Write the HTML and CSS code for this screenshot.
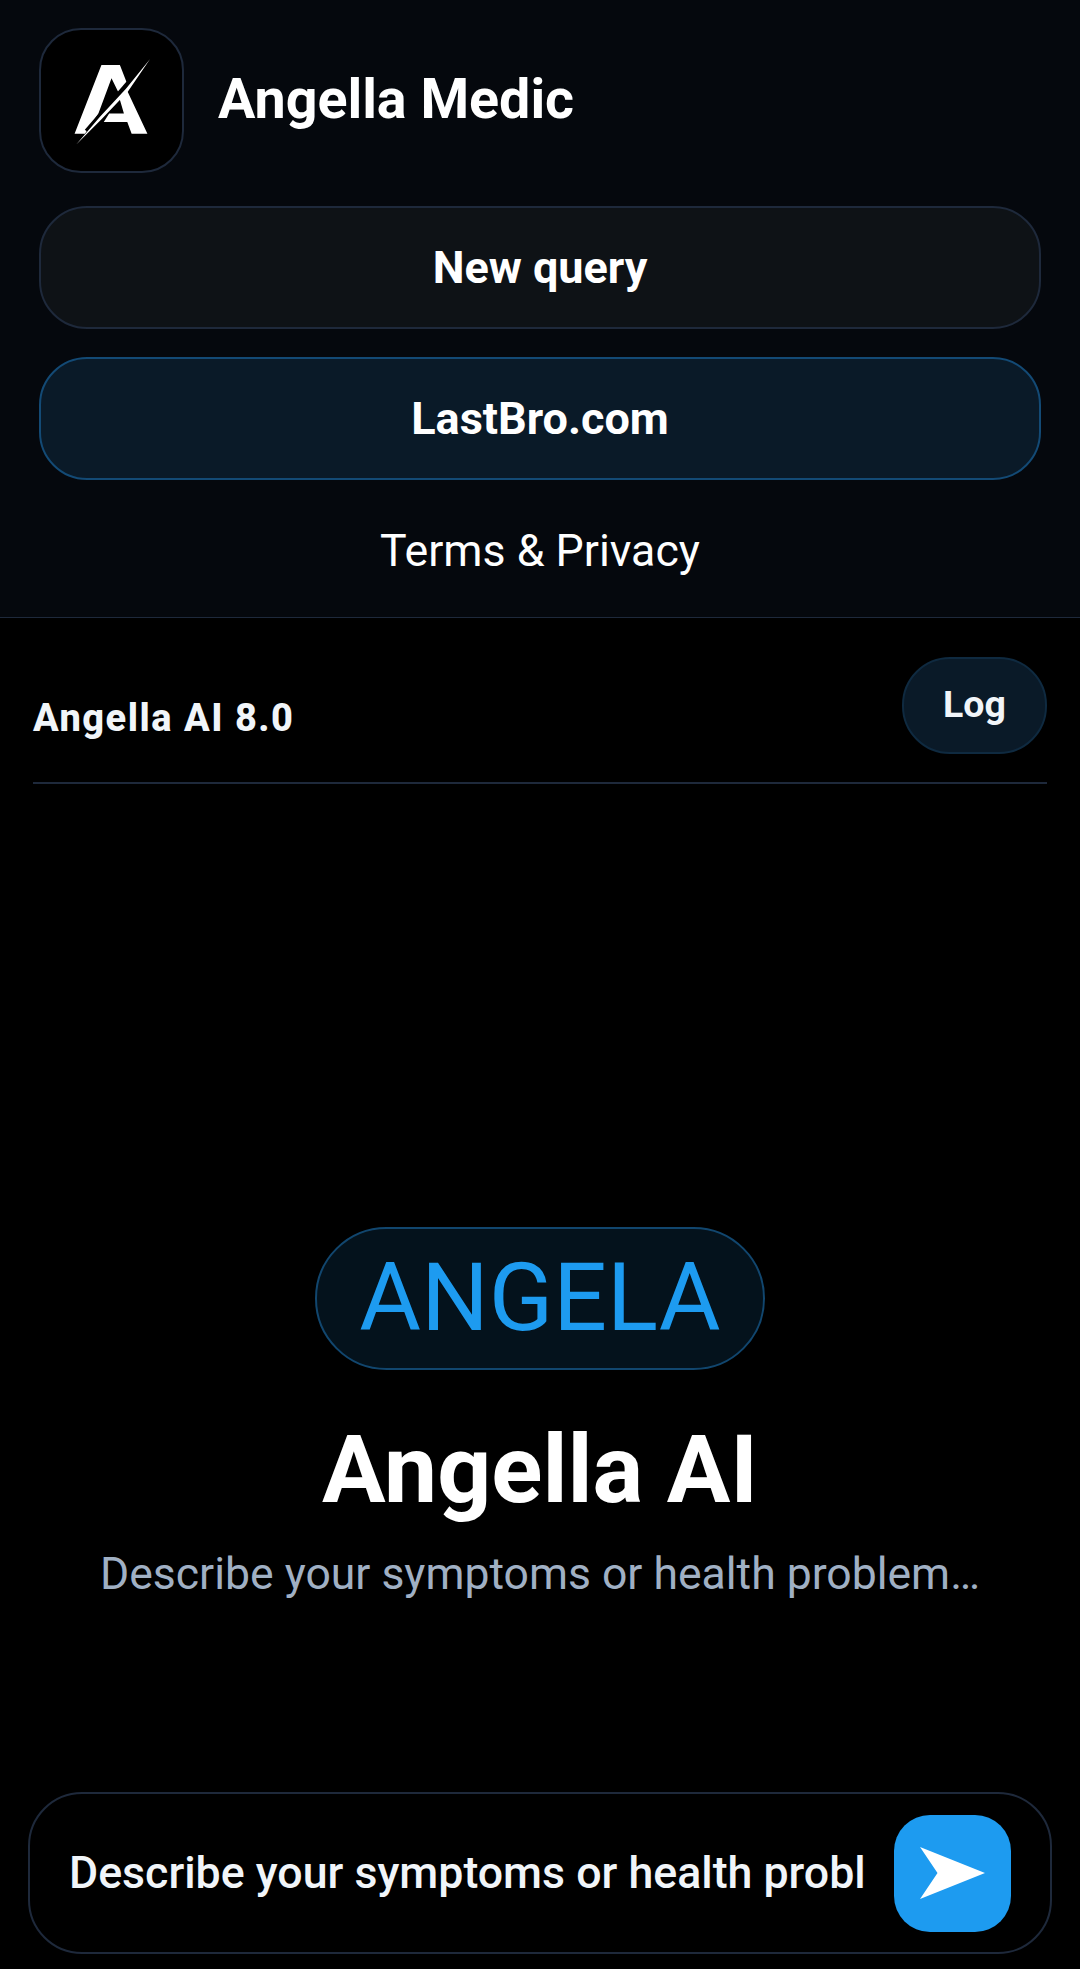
FILE: index.html
```html
<!DOCTYPE html>
<html lang="en">
<head>
<meta charset="utf-8">
<title>Angella Medic</title>
<link rel="stylesheet" href="styles.css">
</head>
<body>
<div class="app">
  <header class="sidebar">
    <div class="brand">
      <div class="brand-logo">
        <svg class="brand-mark" viewBox="60 55 430 432" aria-hidden="true">
          <path class="mark-fill" d="M165 370L245 165H300L322 222L298 252L275 205L236 310L196 370Z"/>
          <path class="mark-fill" d="M320 238L382 370H335L322 335H252L268 310H312L298 262Z"/>
          <path class="mark-cut" d="M336 205L200 362"/>
          <path class="mark-fill" d="M390 147L318 236L240 320L170 402L246 326L324 244Z"/>
        </svg>
      </div>
      <span class="brand-name">Angella Medic</span>
    </div>
    <a class="side-btn side-btn-plain">New query</a>
    <a class="side-btn side-btn-accent">LastBro.com</a>
    <a class="side-link">Terms &amp; Privacy</a>
  </header>

  <main class="chat">
    <div class="chat-head">
      <span class="model-name">Angella AI 8.0</span>
      <button class="log-btn" type="button">Log</button>
    </div>

    <section class="hero">
      <div class="hero-badge">ANGELA</div>
      <h1 class="hero-title">Angella AI</h1>
      <p class="hero-sub">Describe your symptoms or health problem…</p>
    </section>

    <form class="composer">
      <div class="composer-text">Describe your symptoms or health probl</div>
      <button class="send-btn" type="button" aria-label="Send">
        <svg class="send-icon" viewBox="0 0 66 52" aria-hidden="true">
          <path d="M0 0L65 26L0 52L17.500 26Z"/>
        </svg>
      </button>
    </form>
  </main>
</div>
</body>
</html>
```

FILE: styles.css
```css
* {
  box-sizing: border-box;
}

html,
body {
  margin: 0;
  height: 100%;
  background: #000;
}

body {
  font-family: Roboto, "Liberation Sans", sans-serif;
  color: #fff;
}

.app {
  display: flex;
  flex-direction: column;
  height: 1969px;
}

/* Top navigation panel */
.sidebar {
  display: flex;
  flex-direction: column;
  height: 618px;
  padding: 28px 39px 0;
  background: #05080d;
  border-bottom: 1px solid #1e293b;
}

.brand {
  display: flex;
  align-items: center;
  gap: 34px;
  margin-bottom: 33px;
}

.brand-logo {
  display: flex;
  align-items: center;
  justify-content: center;
  width: 145px;
  height: 145px;
  background: #000;
  border: 2px solid #1e293b;
  border-radius: 42px;
}

.brand-mark {
  width: 145px;
  height: 145px;
  flex: none;
}

.mark-fill {
  fill: #fff;
}

.mark-cut {
  fill: none;
  stroke: #000;
  stroke-width: 12;
}

.brand-name {
  padding-bottom: 3px;
  font-size: 55.600px;
  font-weight: 700;
}

.side-btn {
  display: flex;
  align-items: center;
  justify-content: center;
  height: 123px;
  border-radius: 48px;
  font-size: 45px;
  font-weight: 700;
}

.side-btn-plain {
  background: #0e1216;
  border: 2px solid #1e293b;
  margin-bottom: 28px;
}

.side-btn-accent {
  background: #0a1a28;
  border: 2px solid #134a75;
}

.side-link {
  margin-top: 45px;
  font-size: 44.700px;
  line-height: 52px;
  text-align: center;
}

/* Conversation area */
.chat {
  flex: 1;
  display: flex;
  flex-direction: column;
  min-height: 0;
}

.chat-head {
  display: flex;
  align-items: flex-start;
  justify-content: space-between;
  height: 166px;
  margin: 0 33px;
  padding-top: 39px;
  border-bottom: 2px solid #1e293b;
}

.model-name {
  margin-top: 39px;
  font-size: 38px;
  line-height: 44px;
  font-weight: 800;
  letter-spacing: 1.500px;
  color: #f1f5f9;
}

.log-btn {
  width: 145px;
  height: 97px;
  padding: 0 0 3px;
  background: #0a1a28;
  border: 2px solid #0f2a40;
  border-radius: 48px;
  font-family: inherit;
  font-size: 37.500px;
  font-weight: 700;
  color: #f1f5f9;
}

.hero {
  flex: 1;
  display: flex;
  flex-direction: column;
  align-items: center;
  padding-top: 443px;
}

.hero-badge {
  display: flex;
  align-items: center;
  justify-content: center;
  width: 450px;
  height: 143px;
  padding-bottom: 2px;
  background: #04121c;
  border: 2px solid #11466e;
  border-radius: 72px;
  font-size: 94.700px;
  color: #1d9bf0;
}

.hero-title {
  margin: 44px 0 0;
  font-size: 94.700px;
  line-height: 112px;
  font-weight: 700;
}

.hero-sub {
  margin: 22px 0 0;
  font-size: 44.500px;
  line-height: 52px;
  color: #a0b0c4;
}

.composer {
  display: flex;
  align-items: center;
  justify-content: space-between;
  height: 162px;
  margin: 0 28px 15px;
  padding: 0 39px;
  border: 2px solid #1e293b;
  border-radius: 54px;
}

.composer-text {
  white-space: nowrap;
  font-size: 44.700px;
  font-weight: 500;
  color: #f1f5f9;
}

.send-btn {
  display: flex;
  align-items: center;
  justify-content: center;
  flex: none;
  width: 117px;
  height: 117px;
  padding: 0;
  background: #1d9bf0;
  border: 0;
  border-radius: 36px;
}

.send-icon {
  width: 66px;
  height: 52px;
  fill: #fff;
}
```
